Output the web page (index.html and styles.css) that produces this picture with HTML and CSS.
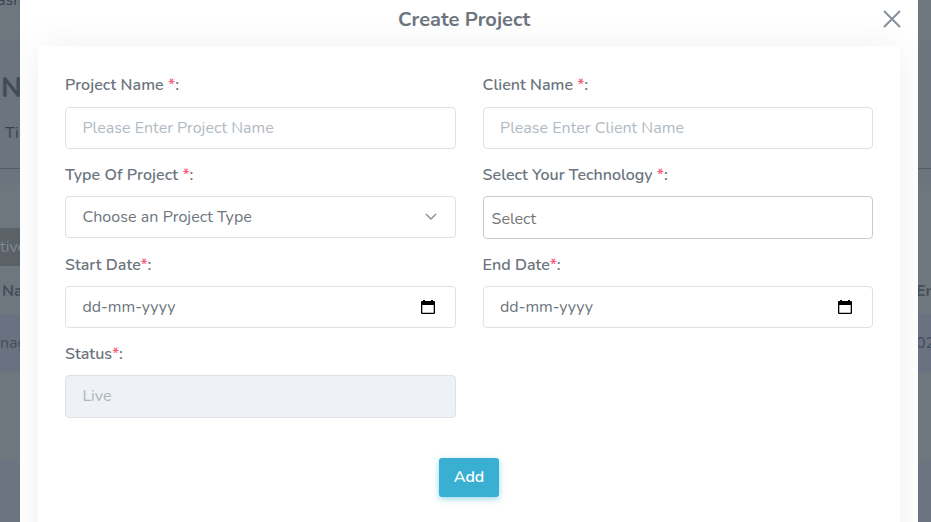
FILE: index.html
```html
<!DOCTYPE html>
<html lang="en">
<head>
<meta charset="utf-8">
<title>Create Project</title>
<link rel="stylesheet" href="styles.css">
</head>
<body>
<div class="page">
  <div class="topbar"><span>ash</span></div>
  <div class="heading"><h1>N</h1><p>Ti</p></div>
  <div class="gap"></div>
  <div class="panel"></div>
  <div class="tab">tive</div>
  <div class="row head"><span>Na</span><span class="right">En</span></div>
  <div class="row item"><span>nag</span><span class="right">02</span></div>
  <div class="empty"></div>
</div>
<section class="modal">
  <header class="modal-header">
    <h2>Create Project</h2>
    <svg class="close" width="18" height="18" viewBox="0 0 18 18"><path d="M1.5 1.5 16.5 16.5M16.5 1.5 1.5 16.5"/></svg>
  </header>
  <form class="card">
    <div class="fields">
      <div class="field"><label class="wide">Project Name <b>*</b>:</label><div class="control placeholder">Please Enter Project Name</div></div>
      <div class="field"><label>Client Name <b>*</b>:</label><div class="control placeholder">Please Enter Client Name</div></div>
      <div class="field"><label class="wide">Type Of Project <b>*</b>:</label><div class="control"><span class="choose">Choose an Project Type</span><svg class="chevron" width="12" height="8" viewBox="0 0 12 8"><path d="M1.2 1.2 6 6 10.8 1.2"/></svg></div></div>
      <div class="field"><label>Select Your Technology <b>*</b>:</label><div class="control multi">Select</div></div>
      <div class="field"><label>Start Date<b>*</b>:</label><div class="control date"><span>dd-mm-yyyy</span><svg class="calendar" width="14" height="15" viewBox="0 0 14 15"><path fill-rule="evenodd" d="M2 0h2v1h6V0h2v1h1q1 0 1 1v11q0 1-1 1H1q-1 0-1-1V2q0-1 1-1h1zM1.3 5v7.7h11.4V5z"/></svg></div></div>
      <div class="field"><label>End Date<b>*</b>:</label><div class="control date"><span>dd-mm-yyyy</span><svg class="calendar" width="14" height="15" viewBox="0 0 14 15"><path fill-rule="evenodd" d="M2 0h2v1h6V0h2v1h1q1 0 1 1v11q0 1-1 1H1q-1 0-1-1V2q0-1 1-1h1zM1.3 5v7.7h11.4V5z"/></svg></div></div>
      <div class="field"><label>Status<b>*</b>:</label><div class="control disabled">Live</div></div>
    </div>
    <button type="button" class="add">Add</button>
  </form>
</section>
</body>
</html>
```
FILE: styles.css
```css
* { box-sizing: border-box; }
body { margin: 0; width: 931px; height: 522px; overflow: hidden; position: relative; font: 16px/24px Nunito, Lato, sans-serif; color: #6c757d; }
h1, h2, p { margin: 0; }
.page { height: 522px; background: #6f777e; color: #454e5b; }
.topbar { height: 40px; overflow: hidden; color: #39424e; }
.topbar span { display: block; margin: -12px 0 0 -3px; }
.heading { height: 129px; padding: 30px 0 0 1px; background: #6c747e; border-bottom: 1px solid #555d66; }
.heading h1 { font-size: 28px; line-height: 36px; color: #424c57; }
.heading p { padding: 15px 0 0 4px; color: #39424e; }
.gap { height: 16px; background: #6c747e; }
.panel { height: 43px; }
.tab { width: 25px; height: 38px; line-height: 38px; background: #5a6167; color: #838a90; overflow: hidden; }
.row { display: flex; justify-content: space-between; overflow: hidden; }
.row .right { width: 15px; }
.head { height: 48px; line-height: 50px; padding-left: 2px; font-weight: 700; }
.item { height: 58px; line-height: 58px; background: #6a7180; }
.empty { height: 150px; background: linear-gradient(#6f777e 90px, #6b7480 90px); }
.modal { position: absolute; left: 20px; top: 0; width: 898px; height: 522px; overflow: hidden; background: #fff; }
.modal-header { display: grid; grid-template-columns: 1fr auto; height: 46px; position: relative; z-index: 1; }
.modal-header h2 { grid-area: 1 / 1 / 2 / 3; text-align: center; font-size: 20px; line-height: 39px; font-weight: 700; padding-right: 10px; }
.close { grid-area: 1 / 2; margin: 10px 17px 0 0; fill: none; stroke: #87919d; stroke-width: 2; stroke-linecap: round; }
.card { margin: 0 18px; height: 560px; padding: 27px 27px 0; border-radius: 4px; background: #fff; box-shadow: 0 0 35px rgba(100,105,110,.1); }
.fields { display: grid; grid-template-columns: 391px 390.4px; column-gap: 26.6px; grid-template-rows: 90px 90px 89px 89px; }
.field { display: flex; flex-direction: column; }
label { display: block; align-self: flex-start; white-space: nowrap; font-weight: 600; margin-bottom: 9px; }
.field:nth-child(-n+2) label { margin-bottom: 10px; }
.wide { letter-spacing: .06px; }
label b { color: #fa5c7c; font-weight: 600; }
.control { height: 42px; display: flex; align-items: center; justify-content: space-between; border: 1px solid #dee2e6; border-radius: 4px; padding: 0 17px 0 16.4px; white-space: nowrap; background: #fff; }
.placeholder { color: #b1b9c2; padding-bottom: 1px; letter-spacing: .02px; }
.choose { letter-spacing: .06px; }
.multi { height: 43px; border-color: #c8cacc; padding: 2px 8px 0; color: #757575; }
.chevron { margin-right: 1px; fill: none; stroke: #8a939c; stroke-width: 1.5; stroke-linecap: round; stroke-linejoin: round; }
.calendar { margin-right: 3px; fill: #000; }
.disabled { height: 43px; background: #eef2f7; color: #adb5bd; padding-bottom: 1px; }
.add { display: block; width: 60px; height: 39px; margin: 27px 0 0 374px; padding: 0 0 2px; border: 0; border-radius: 3px; background: #39afd1; color: #fff; font: 600 16px/24px Nunito, Lato, sans-serif; box-shadow: 0 2px 6px rgba(57,175,209,.5); }
```
